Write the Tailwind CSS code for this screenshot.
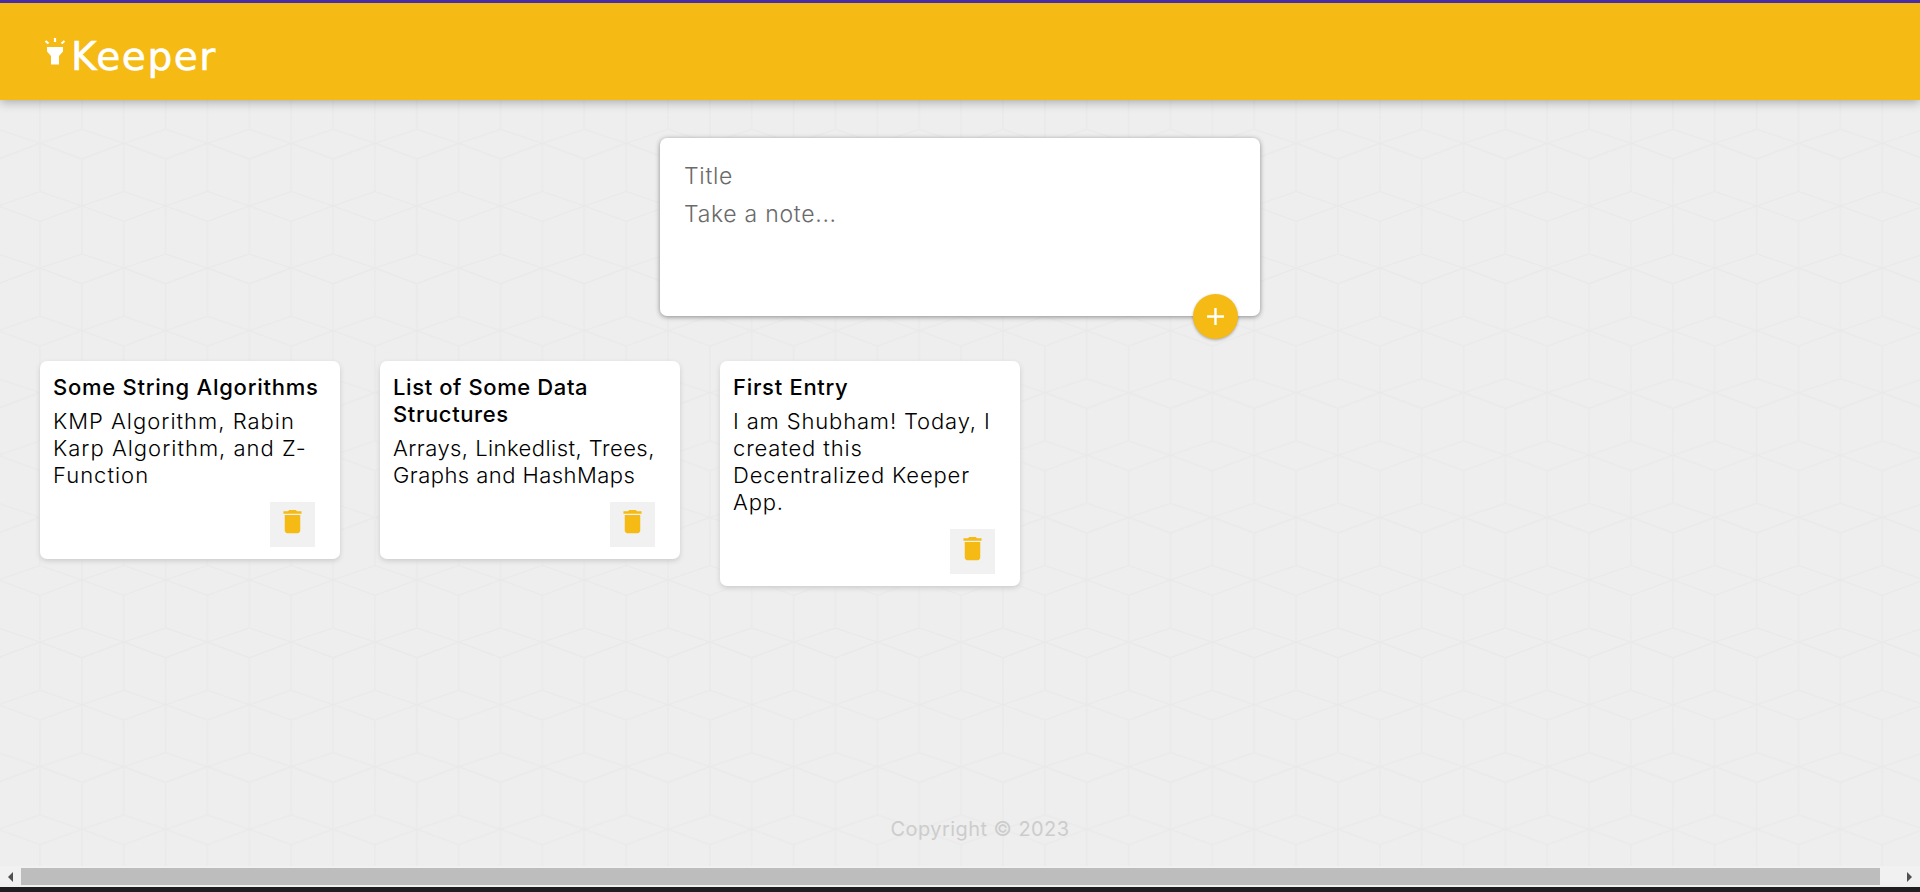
<!DOCTYPE html>
<html lang="en">
<head>
    <meta charset="UTF-8">
    <title>Keeper</title>
    <script src="https://cdn.jsdelivr.net/npm/@tailwindcss/browser@4"></script>
</head>
<body class="h-[892px] overflow-hidden bg-[#eeeeee] font-['Inter',sans-serif] text-black">
    <div class="relative flex h-[892px] flex-col">
        <!-- cube background -->
        <svg class="absolute inset-0 h-full w-full" xmlns="http://www.w3.org/2000/svg">
            <defs>
                <pattern id="cubes" width="83.74" height="124.67" patternUnits="userSpaceOnUse" patternTransform="translate(81.9 4.63)">
                    <path d="M0 29.7V124.67M83.74 29.7V124.67M41.87 0V62.3M41.87 92V124.67M0 0L41.87 14L83.74 0M0 29.7L41.87 14L83.74 29.7M0 76.7L41.87 62.3L83.74 76.7M0 76.7L41.87 92L83.74 76.7" fill="none" stroke="#e9e9e9" stroke-width="1.3"/>
                </pattern>
            </defs>
            <rect width="100%" height="100%" fill="url(#cubes)"/>
        </svg>

        <div class="relative z-20 h-[3px] shrink-0 bg-[#4a2ca6]"></div>

        <header class="relative z-10 flex h-[97px] shrink-0 items-start bg-[#f5ba13] pl-[44px] pt-[32px] shadow-[0_2px_10px_rgba(0,0,0,0.3)]">
            <svg class="mt-[2px] h-[28px] w-[22px] shrink-0" viewBox="0 0 22 28" xmlns="http://www.w3.org/2000/svg">
                <path d="M3 10H19V14.5L15 19V27.5H7V19L3 14.5Z" fill="#fff"/>
                <path d="M11 1V5M1.5 4L4.5 6.5M20.5 4L17.5 6.5" stroke="#fff" stroke-width="2.2" fill="none"/>
            </svg>
            <h1 class="ml-[5px] font-['DejaVu_Sans',sans-serif] text-[39px] leading-[44px] tracking-[1.6px] text-white [-webkit-text-stroke:0.6px_white]">Keeper</h1>
        </header>

        <main class="relative flex flex-1 flex-col">
            <form class="relative ml-[660px] mt-[38px] h-[178px] w-[600px] rounded-[7px] bg-white px-[24px] pt-[20px] shadow-[0_1px_5px_rgb(138,137,137)]">
                <input type="text" placeholder="Title" class="block h-[36px] w-full text-[23px] font-light tracking-[0.72px] outline-none placeholder:text-[#6a6a6a]">
                <textarea rows="3" placeholder="Take a note..." class="mt-[5px] block h-[110px] w-full resize-none text-[23px] leading-[30px] font-light tracking-[0.72px] outline-none placeholder:text-[#6a6a6a]"></textarea>
                <button type="button" class="absolute bottom-[-23px] right-[22px] flex h-[45px] w-[45px] items-center justify-center rounded-full bg-[#f5ba13] shadow-[0_1px_3px_rgba(0,0,0,0.3)]">
                    <svg class="h-[29px] w-[29px]" viewBox="0 0 24 24" fill="#fff" xmlns="http://www.w3.org/2000/svg"><path d="M19 13h-6v6h-2v-6H5v-2h6V5h2v6h6v2z"/></svg>
                </button>
            </form>

            <section class="relative ml-[40px] mt-[45px] flex items-start gap-[40px]">
                <article class="w-[300px] rounded-[7px] bg-white px-[13px] pb-[12px] pt-[13px] shadow-[0_2px_5px_#ccc]">
                    <h2 class="text-[22px] leading-[27px] font-medium tracking-[0.75px]">Some String Algorithms</h2>
                    <p class="mt-[7px] whitespace-nowrap text-[22px] leading-[27px] font-light tracking-[1px]">KMP Algorithm, Rabin<br>Karp Algorithm, and Z-<br>Function</p>
                    <div class="mt-[13px] flex justify-end pr-[12px]">
                        <button type="button" class="flex h-[45px] w-[45px] items-start justify-center bg-[#f1f1f1] pt-[4px]">
                            <svg class="h-[31px] w-[31px]" viewBox="0 0 24 24" fill="#f5ba13" xmlns="http://www.w3.org/2000/svg"><path d="M6 19c0 1.1.9 2 2 2h8c1.1 0 2-.9 2-2V7H6v12zM19 4h-3.5l-1-1h-5l-1 1H5v2h14V4z"/></svg>
                        </button>
                    </div>
                </article>

                <article class="w-[300px] rounded-[7px] bg-white px-[13px] pb-[12px] pt-[13px] shadow-[0_2px_5px_#ccc]">
                    <h2 class="text-[22px] leading-[27px] font-medium tracking-[0.6px]">List of Some Data<br>Structures</h2>
                    <p class="mt-[7px] whitespace-nowrap text-[22px] leading-[27px] font-light tracking-[0.45px]">Arrays, Linkedlist, Trees,<br>Graphs and HashMaps</p>
                    <div class="mt-[13px] flex justify-end pr-[12px]">
                        <button type="button" class="flex h-[45px] w-[45px] items-start justify-center bg-[#f1f1f1] pt-[4px]">
                            <svg class="h-[31px] w-[31px]" viewBox="0 0 24 24" fill="#f5ba13" xmlns="http://www.w3.org/2000/svg"><path d="M6 19c0 1.1.9 2 2 2h8c1.1 0 2-.9 2-2V7H6v12zM19 4h-3.5l-1-1h-5l-1 1H5v2h14V4z"/></svg>
                        </button>
                    </div>
                </article>

                <article class="w-[300px] rounded-[7px] bg-white px-[13px] pb-[12px] pt-[13px] shadow-[0_2px_5px_#ccc]">
                    <h2 class="text-[22px] leading-[27px] font-medium tracking-[0.7px]">First Entry</h2>
                    <p class="mt-[7px] whitespace-nowrap text-[22px] leading-[27px] font-light tracking-[0.85px]">I am Shubham! Today, I<br>created this<br>Decentralized Keeper<br>App.</p>
                    <div class="mt-[13px] flex justify-end pr-[12px]">
                        <button type="button" class="flex h-[45px] w-[45px] items-start justify-center bg-[#f1f1f1] pt-[4px]">
                            <svg class="h-[31px] w-[31px]" viewBox="0 0 24 24" fill="#f5ba13" xmlns="http://www.w3.org/2000/svg"><path d="M6 19c0 1.1.9 2 2 2h8c1.1 0 2-.9 2-2V7H6v12zM19 4h-3.5l-1-1h-5l-1 1H5v2h14V4z"/></svg>
                        </button>
                    </div>
                </article>
            </section>

            <footer class="relative mt-auto flex justify-center pb-[25px] pl-[40px] text-[20px] leading-[24px] tracking-[0.45px] text-[#cccccc]">
                <p>Copyright © 2023</p>
            </footer>
        </main>

        <!-- horizontal scrollbar -->
        <div class="relative flex h-[21px] shrink-0 items-center bg-[#f1f1f1]">
            <div class="ml-[8px] h-0 w-0 border-y-[5px] border-r-[5px] border-y-transparent border-r-[#505050]"></div>
            <div class="ml-[8px] h-[17px] flex-1 bg-[#bdbdbd]"></div>
            <div class="ml-[27px] mr-[8px] h-0 w-0 border-y-[5px] border-l-[5px] border-y-transparent border-l-[#505050]"></div>
        </div>
        <div class="relative h-[5px] shrink-0 bg-[#1f1f1f]"></div>
    </div>
</body>
</html>
